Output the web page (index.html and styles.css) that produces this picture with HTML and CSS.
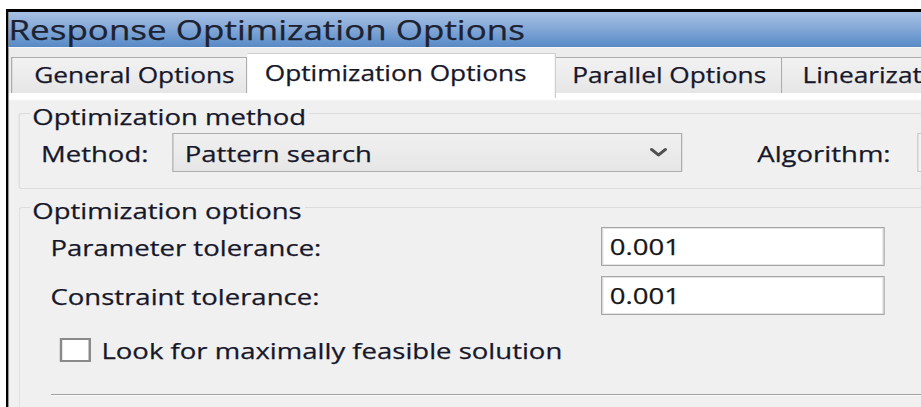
FILE: index.html
```html
<!DOCTYPE html>
<html lang="en">
<head>
<meta charset="utf-8">
<title>Response Optimization Options</title>
<link rel="stylesheet" href="styles.css">
</head>
<body>
<div class="window">
  <div class="titlebar">Response Optimization Options</div>

  <div class="tabstrip">
    <div class="tab tab-general">General Options</div>
    <div class="tab tab-active">Optimization Options</div>
    <div class="tab tab-parallel">Parallel Options</div>
    <div class="tab tab-linear">Linearization Options</div>
  </div>

  <div class="panel">
    <fieldset class="group">
      <legend>Optimization method</legend>
      <div class="method-row">
        <span class="method-label">Method:</span>
        <div class="dropdown">
          <span>Pattern search</span>
          <svg class="chevron" viewBox="0 0 14 9" width="14" height="9" aria-hidden="true">
            <path d="M1.5 1.5 L7 7 L12.5 1.5" fill="none" stroke="#505050" stroke-width="2.6" stroke-linecap="round" stroke-linejoin="round"/>
          </svg>
        </div>
        <span class="algo-label">Algorithm:</span>
        <div class="algo-field"></div>
      </div>
    </fieldset>

    <fieldset class="group group-options">
      <legend>Optimization options</legend>
      <div class="form">
        <div class="form-grid">
          <span class="field-label">Parameter tolerance:</span>
          <div class="textbox">0.001</div>
          <span class="field-label">Constraint tolerance:</span>
          <div class="textbox">0.001</div>
        </div>
        <label class="check-row">
          <span class="checkbox"></span>
          <span>Look for maximally feasible solution</span>
        </label>
        <div class="separator"></div>
      </div>
    </fieldset>
  </div>
</div>
</body>
</html>
```

FILE: styles.css
```css
html, body {
  margin: 0;
  padding: 0;
  background: #ffffff;
  overflow: hidden;
  width: 921px;
  height: 407px;
}

/* The dialog is drawn in its own units and widened horizontally */
.window {
  width: 900px;
  height: 400px;
  margin: 9px 0 0 5.6px;
  border-left: 2.4px solid #000;
  border-top: 3px solid #000;
  background: #f0f0f0;
  transform: scaleX(1.25);
  transform-origin: 0 0;
  font-family: "Open Sans", "Noto Sans", sans-serif;
  color: #17172a;
  -webkit-text-stroke: 0.25px currentColor;
  display: flex;
  flex-direction: column;
  overflow: hidden;
}

.titlebar {
  flex-shrink: 0;
  height: 35px;
  line-height: 35px;
  font-size: 28px;
  color: #1c2230;
  background: linear-gradient(#a6c1e3 0%, #86a9d8 45%, #6795cd 80%, #5a89c5 100%);
  white-space: nowrap;
}

.tabstrip {
  flex-shrink: 0;
  height: 40px;
  padding: 5px 0 0 1.6px;
  border-top: 1px solid #f7f7f7;
  background: #ececec;
  display: flex;
  align-items: flex-start;
  font-size: 21px;
  white-space: nowrap;
}

.tab {
  flex-shrink: 0;
  height: 35px;
  margin-top: 4px;
  line-height: 35px;
  border: 1px solid #acacac;
  border-bottom: none;
  background: linear-gradient(#f2f2f2, #e6e6e6);
  box-sizing: content-box;
  overflow: hidden;
}

.tab + .tab {
  border-left: none;
}

.tab-general {
  width: 169px;
  padding-left: 18px;
}

.tab-active {
  position: relative;
  z-index: 1;
  width: 232px;
  padding-left: 14.4px;
  height: 44px;
  margin-top: 0;
  line-height: 39px;
  background: #ffffff;
  border-color: #d0d0d0;
}

.tab-parallel {
  width: 167.2px;
  padding-left: 13px;
}

.tab-linear {
  width: 240px;
  padding-left: 16px;
}

.panel {
  flex: 1;
  padding: 2px 0 0 8px;
  background: linear-gradient(#ffffff 0, #ffffff 6px, #f0f0f0 8px);
  font-size: 22px;
}

.group {
  margin: 0;
  padding: 2px 0 16px 17px;
  border: 1px solid #dcdcdc;
  border-radius: 3px;
  min-width: 0;
}

.group legend {
  margin-left: -9px;
  padding: 6px 2px 0;
  line-height: 30px;
}

.method-row {
  display: flex;
  align-items: center;
  white-space: nowrap;
}

.method-row > * {
  flex-shrink: 0;
}

.method-label {
  width: 105px;
}

.dropdown {
  width: 408px;
  height: 39px;
  box-sizing: border-box;
  border: 1px solid #adadad;
  background: linear-gradient(#f0f0f0, #e6e6e6);
  display: flex;
  align-items: center;
  justify-content: space-between;
  padding: 0 11px 0 9px;
}

.chevron {
  display: block;
}

.algo-label {
  margin-left: 60px;
}

.algo-field {
  margin-left: 21px;
  width: 200px;
  height: 37px;
  border: 1px solid #c8c8c8;
  background: #f4f4f4;
}

.group-options {
  padding-bottom: 40px;
  border-bottom: none;
}

.form {
  padding-left: 7.6px;
}

.form-grid {
  display: grid;
  grid-template-columns: 440.4px 227px;
  grid-auto-rows: 39px;
  row-gap: 10px;
  align-items: center;
}

.textbox {
  height: 39px;
  box-sizing: border-box;
  border: 1px solid #a6a6a6;
  box-shadow: inset 0 0 0 1px #e4e4e4;
  background: #ffffff;
  padding-left: 6px;
  line-height: 36px;
  color: #161616;
}

.check-row {
  display: flex;
  align-items: center;
  margin: 23px 0 0 7.2px;
  height: 24px;
  white-space: nowrap;
}

.checkbox {
  flex-shrink: 0;
  width: 24.8px;
  height: 24px;
  box-sizing: border-box;
  border: 2px solid #8a8a8a;
  background: #ffffff;
  margin-right: 8.8px;
}

.separator {
  margin-top: 32px;
  height: 1px;
  background: #a0a0a0;
  border-bottom: 1px solid #fbfbfb;
}
```
